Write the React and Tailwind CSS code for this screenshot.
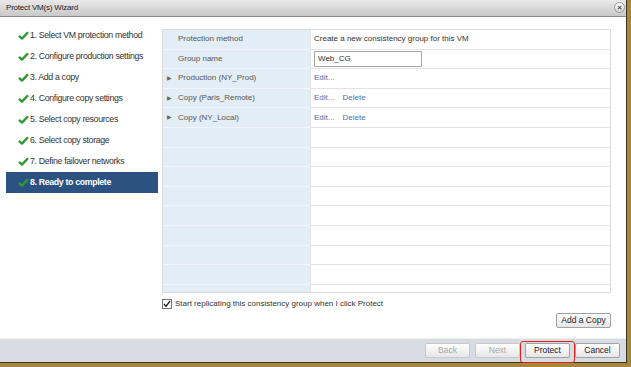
import React from 'react';

const steps = [
  '1. Select VM protection method',
  '2. Configure production settings',
  '3. Add a copy',
  '4. Configure copy settings',
  '5. Select copy resources',
  '6. Select copy storage',
  '7. Define failover networks',
  '8. Ready to complete',
];

function Check() {
  return (
    <svg width="11" height="9" viewBox="0 0 11 9" className="shrink-0">
      <path d="M1 4.8 L4 7.6 L10 1.2" fill="none" stroke="#2f9a35" strokeWidth="2.4" strokeLinejoin="round" />
    </svg>
  );
}

function Row({ arrow, label, children }) {
  return (
    <div className="flex h-[19.6px] shrink-0">
      <div className="w-[147px] shrink-0 bg-[#e3edf5] border-b border-[#f1f5f9] flex items-center pl-[4px] text-[#555]">
        <span className="w-[11px] text-[6px] text-[#666]">{arrow ? '▶' : ''}</span>
        {label}
      </div>
      <div className="flex-1 border-b border-l border-[#e4e4e4] flex items-center pl-[3px] text-[#333]">
        {children}
      </div>
    </div>
  );
}

function Btn({ children, disabled, className = '' }) {
  return (
    <button
      className={`block shrink-0 w-[45px] h-[15px] rounded-[2px] border bg-gradient-to-b from-white to-[#e6e6e6] text-[8.5px] leading-none ${
        disabled ? 'border-[#c9c9c9] text-[#a7a7a7]' : 'border-[#a2a2a2] text-[#222]'
      } ${className}`}
    >
      {children}
    </button>
  );
}

export default function App() {
  return (
    <div className="w-[631px] h-[367px] bg-[#a4873a] overflow-hidden" style={{ fontFamily: '"Liberation Sans", Arial, sans-serif' }}>
      <div className="w-[627px] h-[363px] bg-white flex flex-col border-r border-b border-[#3b3426] relative">
        {/* Title bar */}
        <div className="h-[17px] shrink-0 bg-gradient-to-b from-[#e9e9e9] to-[#c8c8c8] border-b border-[#8a8a8a] flex items-center pl-[6px] text-[8px] text-[#222] tracking-[-0.2px]">
          Protect VM(s) Wizard
        </div>
        <div className="absolute right-[1px] top-[2px] w-[11px] h-[11px] rounded-full border border-[#9a9a9a] bg-gradient-to-b from-white to-[#d4d4d4] flex items-center justify-center text-[8px] font-bold leading-none text-[#444]">
          ×
        </div>

        <div className="flex flex-1 min-h-0">
          {/* Steps */}
          <div className="w-[162px] shrink-0 pt-[8px] pl-[6px]">
            {steps.map((s, i) => {
              const active = i === steps.length - 1;
              return (
                <div
                  key={s}
                  className={`h-[21px] w-[152px] flex items-center pl-[12px] gap-[1px] text-[8.8px] tracking-[-0.35px] ${
                    active ? 'bg-[#2c5282] text-white font-bold' : 'text-[#333]'
                  }`}
                >
                  <Check />
                  <span>{s}</span>
                </div>
              );
            })}
          </div>

          {/* Content */}
          <div className="flex-1 flex flex-col pt-[12px] text-[8px]">
            <div className="w-[449px] h-[264px] border border-[#dcdcdc] flex flex-col overflow-hidden">
              <Row label="Protection method">Create a new consistency group for this VM</Row>
              <Row label="Group name">
                <div className="w-[108px] h-[16px] border border-[#a9a9a9] flex items-center pl-[3px]">Web_CG</div>
              </Row>
              <Row arrow label="Production (NY_Prod)">
                <span className="text-[#4f72a8]">Edit...</span>
              </Row>
              <Row arrow label="Copy (Paris_Remote)">
                <span className="text-[#4f72a8]">Edit...</span>
                <span className="text-[#4f72a8] ml-[8px]">Delete</span>
              </Row>
              <Row arrow label="Copy (NY_Local)">
                <span className="text-[#4f72a8]">Edit...</span>
                <span className="text-[#4f72a8] ml-[8px]">Delete</span>
              </Row>
              {Array.from({ length: 9 }).map((_, i) => (
                <Row key={i} label="" />
              ))}
            </div>

            <label className="flex items-center gap-[3px] mt-[5px] h-[11px] text-[#333]">
              <span className="w-[10px] h-[10px] border border-[#777] bg-white flex items-center justify-center">
                <svg width="8" height="8" viewBox="0 0 8 8">
                  <path d="M1 4 L3 6.5 L7 1" fill="none" stroke="#222" strokeWidth="1.3" />
                </svg>
              </span>
              Start replicating this consistency group when I click Protect
            </label>

            <div className="w-[449px] flex justify-end mt-[4px]">
              <button className="w-[55px] h-[15px] rounded-[2px] border border-[#a2a2a2] bg-gradient-to-b from-white to-[#e6e6e6] text-[8.5px] leading-none text-[#222]">
                Add a Copy
              </button>
            </div>
          </div>
        </div>

        {/* Footer */}
        <div className="h-[24px] shrink-0 bg-[#d8dce2] border-t border-[#eef0f3] flex justify-end items-start pt-[4px] pr-[6px]">
          <Btn disabled>Back</Btn>
          <Btn disabled className="ml-[5px]">Next</Btn>
          <div className="w-[55px] h-[22px] -mt-[2px] border-[1.5px] border-[#e0201e] rounded-[3px] flex justify-center pt-[1px]">
            <Btn>Protect</Btn>
          </div>
          <Btn>Cancel</Btn>
        </div>
      </div>
    </div>
  );
}
